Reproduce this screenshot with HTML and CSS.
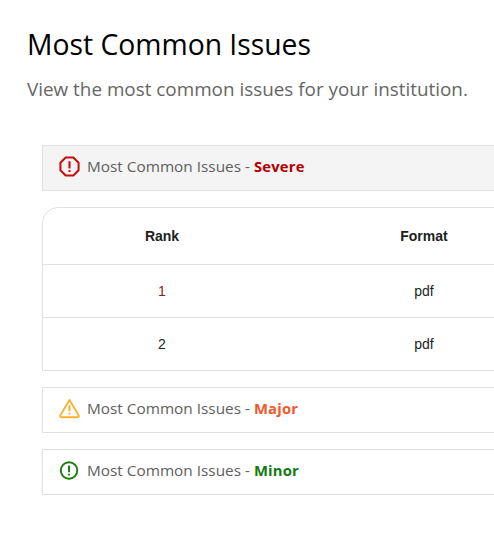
FILE: index.html
```html
<!DOCTYPE html>
<html lang="en">
<head>
<meta charset="utf-8">
<title>Most Common Issues</title>
<link rel="stylesheet" href="styles.css">
</head>
<body>
<main class="page">
  <h1 class="title">Most Common Issues</h1>
  <p class="subtitle">View the most common issues for your institution.</p>
  <section class="issues">
    <div class="panel panel-active">
      <svg class="icon" viewBox="0 0 22 22" fill="none" stroke="#c80c0c" stroke-width="2.1"><path d="M7 1.5h8L20.5 7v8L15 20.5H7L1.5 15V7z" stroke-linejoin="round"/><path d="M11 5.5v7.5" stroke-width="2.2"/><path d="M11 14.8v2" stroke-width="2.2"/></svg>
      <span class="panel-text">Most Common Issues - <strong class="severe">Severe</strong></span>
    </div>
    <div class="table-wrap">
      <table class="table">
        <thead><tr><th class="col-rank">Rank</th><th class="col-format">Format</th></tr></thead>
        <tbody>
          <tr><td class="rank-first">1</td><td>pdf</td></tr>
          <tr><td>2</td><td>pdf</td></tr>
        </tbody>
      </table>
    </div>
    <div class="panel">
      <svg class="icon" viewBox="0 0 22 22" fill="none" stroke="#fbb12e" stroke-width="2"><path d="M11 2.2 20.6 18.2a1.3 1.3 0 0 1-1.1 1.9H2.5a1.3 1.3 0 0 1-1.1-1.9z" stroke-linejoin="round"/><path d="M11 7.5v6.3" stroke-width="2"/><path d="M11 15.3v2" stroke-width="2"/></svg>
      <span class="panel-text">Most Common Issues - <strong class="major">Major</strong></span>
    </div>
    <div class="panel">
      <svg class="icon" viewBox="0 0 22 22" fill="none" stroke="#1a7a0c" stroke-width="2"><circle cx="10.5" cy="11" r="8.6"/><path d="M10.5 5.8v7" stroke-width="2"/><path d="M10.5 14.3v2" stroke-width="2"/></svg>
      <span class="panel-text">Most Common Issues - <strong class="minor">Minor</strong></span>
    </div>
  </section>
</main>
</body>
</html>
```
FILE: styles.css
```css
html, body {
  margin: 0;
  padding: 0;
  height: 100%;
  overflow: hidden;
  background: #fff;
}
.page {
  width: 800px;
  padding: 25px 0 0 27px;
  box-sizing: border-box;
  font-family: "Open Sans", "Noto Sans", sans-serif;
}
.title {
  margin: 0;
  font-size: 28.3px;
  line-height: 38px;
  font-weight: 400;
  color: #000;
}
.subtitle {
  margin: 12px 0 0;
  font-size: 18.87px;
  line-height: 28px;
  color: #666;
}
.issues {
  margin: 42px 0 0 15px;
  display: flex;
  flex-direction: column;
  gap: 16px;
}
.panel {
  height: 46px;
  box-sizing: border-box;
  display: flex;
  align-items: center;
  gap: 7px;
  padding-left: 16px;
  border: 1px solid #e0e0e0;
  font-size: 15.35px;
  color: #605e5c;
}
.panel-text {
  padding-bottom: 5px;
}
.panel-text strong {
  font-size: 14.8px;
  letter-spacing: 0.2px;
}
.panel-active {
  background: #f4f4f4;
}
.icon {
  width: 21px;
  height: 21px;
  flex: none;
  margin-bottom: 3px;
}
.severe { color: #b40000; }
.major { color: #f4572b; }
.minor { color: #107c10; }
.table-wrap {
  border: 1px solid #e0e0e0;
  border-top-left-radius: 16px;
  overflow: hidden;
}
.table {
  width: 524px;
  border-collapse: collapse;
  table-layout: fixed;
  font-family: "Liberation Sans", Arial, sans-serif;
  font-size: 14px;
  color: #201f1e;
}
.table th, .table td {
  text-align: center;
  padding: 0;
}
.table th {
  height: 56px;
  font-weight: 700;
}
.table td {
  height: 52px;
  border-top: 1px solid #e0e0e0;
}
.col-rank { width: 238px; }
.col-format { width: 286px; }
.rank-first { color: #8f1a1a; }
```
